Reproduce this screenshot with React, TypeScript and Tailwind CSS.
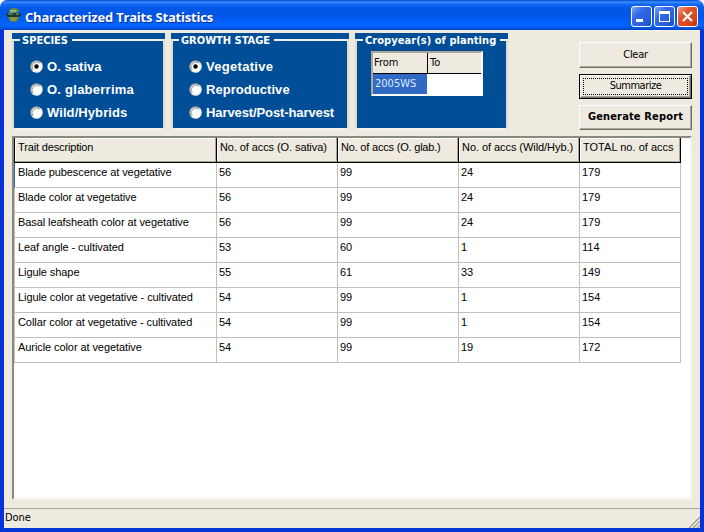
import React from "react";

type GroupProps = { title: string; width: string; tracking: string; children: React.ReactNode };

function Group({ title, width, tracking, children }: GroupProps) {
  return (
    <section className={`flex h-[97px] shrink-0 flex-col bg-[#004e98] ${width}`}>
      <div className="flex h-[14px] items-start">
        <div className="mt-[6px] h-[8px] w-[8px] border-t-2 border-l-2 border-[#f0f2ee] border-l-[#dddcd2]" />
        <h2 className={`pr-[4px] pl-[2px] font-['DejaVu_Sans_Condensed','DejaVu_Sans',sans-serif] text-[11px] leading-[15px] font-bold whitespace-nowrap text-white ${tracking}`}>
          {title}
        </h2>
        <div className="mt-[6px] h-[8px] flex-1 border-t-2 border-r-2 border-[#f0f2ee] border-r-[#dddcd2]" />
      </div>
      <div className="flex-1 border-x-2 border-b-2 border-[#f0f2ee] border-x-[#dddcd2]">{children}</div>
    </section>
  );
}

function Radio({ label, checked, tracking }: { label: string; checked?: boolean; tracking: string }) {
  return (
    <label className="flex h-[23px] items-center">
      <svg width="13" height="13" viewBox="0 0 13 13" className="shrink-0">
        <circle cx="6.5" cy="6.5" r="5.6" fill="#fff" />
        <path d="M2.4 10.6A5.8 5.8 0 0 1 10.6 2.4" fill="none" stroke="#a5a399" strokeWidth="1.1" />
        <path d="M3.2 9.8A4.7 4.7 0 0 1 9.8 3.2" fill="none" stroke="#6b737a" strokeWidth="0.7" />
        <path d="M10.6 2.4A5.8 5.8 0 0 1 2.4 10.6" fill="none" stroke="#f4f2e8" strokeWidth="1.2" />
        {checked && <circle cx="6.5" cy="6.5" r="2.2" fill="#000" />}
      </svg>
      <span className={`ml-[4px] font-['Liberation_Sans',Arial,sans-serif] text-[13px] leading-[16px] font-bold whitespace-nowrap text-white ${tracking}`}>
        {label}
      </span>
    </label>
  );
}

const columns = [
  { label: "Trait description", width: "w-[201px]", tracking: "tracking-[-0.15px]" },
  { label: "No. of accs (O. sativa)", width: "w-[121px]", tracking: "tracking-[-0.09px]" },
  { label: "No. of accs (O. glab.)", width: "w-[121px]", tracking: "tracking-[-0.2px]" },
  { label: "No. of accs (Wild/Hyb.)", width: "w-[121px]", tracking: "tracking-[-0.06px]" },
  { label: "TOTAL no. of accs", width: "w-[101px]", tracking: "tracking-[0.02px]" },
];

const rows = [
  ["Blade pubescence at vegetative", "56", "99", "24", "179"],
  ["Blade color at vegetative", "56", "99", "24", "179"],
  ["Basal leafsheath color at vegetative", "56", "99", "24", "179"],
  ["Leaf angle - cultivated", "53", "60", "1", "114"],
  ["Ligule shape", "55", "61", "33", "149"],
  ["Ligule color at vegetative - cultivated", "54", "99", "1", "154"],
  ["Collar color at vegetative - cultivated", "54", "99", "1", "154"],
  ["Auricle color at vegetative", "54", "99", "19", "172"],
];

function AppIcon() {
  return (
    <svg width="16" height="16" viewBox="0 0 16 16">
      <path d="M3 5C3 2.500 5.500 1 8.500 1s4.800 2 4.800 4z" fill="#5f8a42" />
      <path d="M4 3.500h6M3.500 5h7" stroke="#b3bd68" strokeWidth="1" />
      <path d="M1 6h13l1 2-2 2H2L.5 8z" fill="#173c2b" />
      <path d="M2 7h5M10 7h3" stroke="#9aa84e" strokeWidth="1" />
      <path d="M2 10h11c0 3-2 5-5.500 5S2.500 13 2 10z" fill="#5c8040" />
      <path d="M4 11h7M5 13h5" stroke="#b5a95a" strokeWidth="1" />
    </svg>
  );
}

function CaptionButton({ kind }: { kind: "min" | "max" | "close" }) {
  const color =
    kind === "close"
      ? "bg-[linear-gradient(135deg,#f0a284_0%,#df552f_35%,#d8431c_75%,#b8310c_100%)]"
      : "bg-[linear-gradient(135deg,#7ba4f6_0%,#3468e4_35%,#2a5fe0_70%,#1b4ec4_100%)]";
  return (
    <button className={`flex size-[21px] items-center justify-center rounded-[3px] border border-white ${color}`}>
      <svg width="19" height="19" viewBox="0 0 19 19">
        {kind === "min" && <path d="M4 12h7v3H4z" fill="#fff" />}
        {kind === "max" && <path d="M4 4h11v11H4zM5 7v7h9V7z" fill="#fff" fillRule="evenodd" />}
        {kind === "close" && <path d="M5 5l9 9M14 5l-9 9" stroke="#fff" strokeWidth="2.200" />}
      </svg>
    </button>
  );
}

const raised =
  "border border-t-white border-l-white border-r-[#716f64] border-b-[#716f64] shadow-[inset_-1px_-1px_0_#aca899]";

export default function App() {
  return (
    <div className="flex h-[532px] w-[704px] flex-col overflow-hidden bg-white font-['Liberation_Sans',Arial,sans-serif] text-[11px] text-black">
      <header className="flex h-[30px] shrink-0 items-center rounded-t-[7px] bg-[linear-gradient(180deg,#0048d0_0%,#3c8cff_7%,#1468f4_14%,#0458e6_28%,#0055e5_50%,#0262fb_75%,#0264ff_87%,#0050d8_95%,#003ec0_100%)] pr-[6px] pl-[6px]">
        <AppIcon />
        <h1 className="ml-[3px] flex-1 pt-[4px] font-['Open_Sans',sans-serif] text-[13px] leading-[18px] font-bold tracking-[-0.2px] whitespace-nowrap text-white [text-shadow:1px_1px_0_#0b2f93]">
          Characterized Traits Statistics
        </h1>
        <div className="flex gap-[2px] pt-[3px]">
          <CaptionButton kind="min" />
          <CaptionButton kind="max" />
          <CaptionButton kind="close" />
        </div>
      </header>

      <div className="flex h-[502px] flex-col border-x-4 border-b-4 border-x-[#0831d9] border-b-[#0536d6] bg-[#eeeadf] shadow-[inset_0_1px_0_#f3f4f0]">
        <div className="flex h-[106px] shrink-0 pt-[3px] pl-[8px]">
          <Group title="SPECIES" width="w-[153px]" tracking="tracking-[0px]">
            <div className="pt-[8px] pl-[16px]">
              <Radio label="O. sativa" checked tracking="tracking-[0.05px]" />
              <Radio label="O. glaberrima" tracking="tracking-[0.25px]" />
              <Radio label="Wild/Hybrids" tracking="tracking-[0.08px]" />
            </div>
          </Group>
          <div className="w-[6px]" />
          <Group title="GROWTH STAGE" width="w-[178px]" tracking="tracking-[0px]">
            <div className="pt-[8px] pl-[16px]">
              <Radio label="Vegetative" checked tracking="tracking-[0.3px]" />
              <Radio label="Reproductive" tracking="tracking-[0.05px]" />
              <Radio label="Harvest/Post-harvest" tracking="tracking-[-0.1px]" />
            </div>
          </Group>
          <div className="w-[6px]" />
          <Group title="Cropyear(s) of planting" width="w-[153px]" tracking="tracking-[0.05px]">
            <div className="mt-[4px] ml-[14px] h-[45px] w-[112px] border-2 border-t-[#aca899] border-l-[#aca899] border-r-white border-b-white bg-white">
              <div className="flex h-[21px] border-b border-black bg-[#eeeadf] font-['DejaVu_Sans_Condensed',sans-serif] leading-[19px]">
                <div className="w-[54px] pl-px">From</div>
                <div className="flex-1 border-l border-black pl-[2px]">To</div>
              </div>
              <div className="h-[20px] w-[54px] bg-[#316ac5] pl-[2px] font-['DejaVu_Sans_Condensed',sans-serif] leading-[19px] text-[#dcecff]">2005WS</div>
            </div>
          </Group>
          <div className="ml-[71px] flex w-[113px] flex-col gap-[6px] pt-[9px] font-['DejaVu_Sans_Condensed',sans-serif]">
            <button className={`h-[26px] tracking-[-0.3px] ${raised}`}>Clear</button>
            <button className="h-[25px] border border-black tracking-[-0.5px]">
              <span className={`flex h-full p-[2px] ${raised}`}>
                <span className="flex flex-1 items-center justify-center border border-dotted border-black">Summarize</span>
              </span>
            </button>
            <button className={`h-[25px] font-bold tracking-[0.15px] ${raised}`}>Generate Report</button>
          </div>
        </div>

        <main className="ml-[8px] h-[364px] w-[680px] shrink-0 border-2 border-t-[#8b887c] border-l-[#8b887c] border-r-[#f6f4ec] border-b-[#f6f4ec] bg-white">
          <div className="flex h-[25px] w-[667px] border-b border-l border-black bg-[#eeeadf]">
            {columns.map((c) => (
              <div key={c.label} className={`h-[24px] shrink-0 border-r border-black pt-px pl-[3px] leading-[16px] whitespace-nowrap shadow-[inset_-1px_-1px_0_#aca899,inset_1px_1px_0_#fff] first:w-[202px] ${c.width} ${c.tracking}`}>
                {c.label}
              </div>
            ))}
          </div>
          {rows.map((r, i) => (
            <div key={r[0]} className={`flex h-[25px] w-[667px] border-b border-l border-b-[#c0c0c0] ${i === 0 ? "border-l-[#316ac5]" : "border-l-[#c0c0c0]"}`}>
              {r.map((v, j) => (
                <div key={j} className={`shrink-0 border-r border-[#c0c0c0] pt-px pl-[2px] leading-[16px] whitespace-nowrap first:w-[202px] first:pl-[3px] first:tracking-[-0.08px] ${columns[j].width}`}>
                  {v}
                </div>
              ))}
            </div>
          ))}
        </main>

        <footer className="mt-[8px] flex h-[20px] shrink-0 items-center justify-between border-t border-[#aca899] pl-px font-['DejaVu_Sans_Condensed',sans-serif] tracking-[-0.1px]">
          <span>Done</span>
          <svg width="12" height="12" viewBox="0 0 12 12" className="mt-[7px]">
            <path d="M1 12L12 1M5 12L12 5M9 12L12 9" stroke="#aca899" strokeWidth="1.700" />
            <path d="M0 11L11 0M4 11L12 3M8 11L12 7" stroke="#fff" strokeWidth="0.800" />
          </svg>
        </footer>
      </div>
    </div>
  );
}
